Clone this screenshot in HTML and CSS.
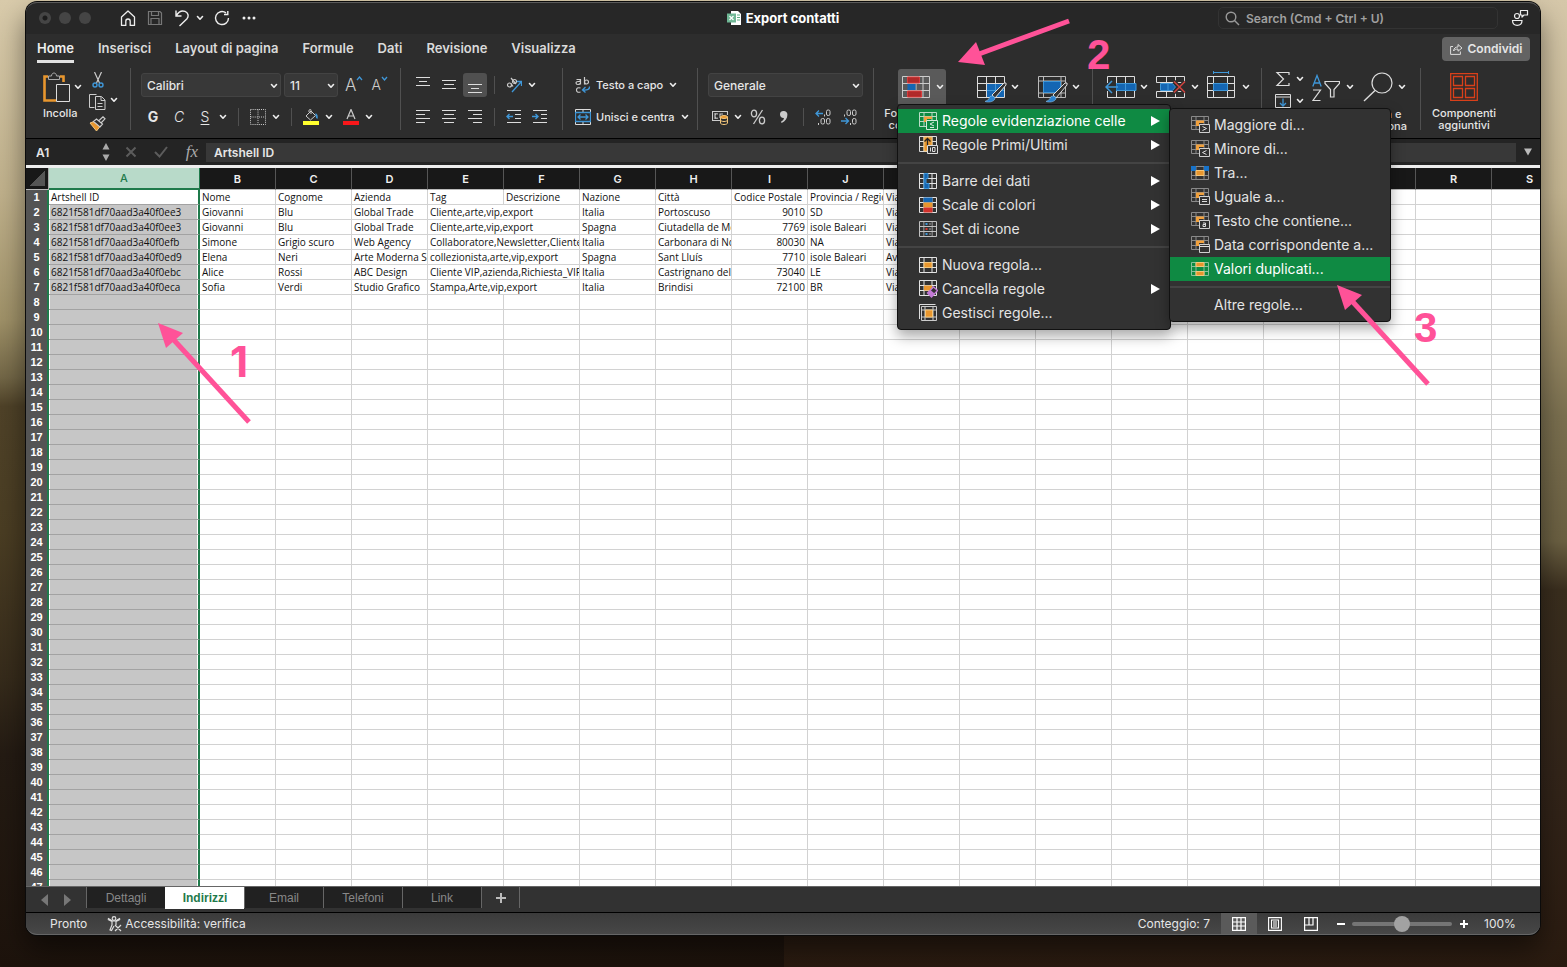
FILE: index.html
```html
<!DOCTYPE html>
<html lang="it">
<head>
<meta charset="utf-8">
<title>Export contatti</title>
<link rel="stylesheet" href="styles.css">
</head>
<body>
<svg class="defs" width="0" height="0" aria-hidden="true">
  <symbol id="chev" viewBox="0 0 8 8"><path d="M1.500 2.500 4 5.200 6.500 2.500" fill="none" stroke="#eee" stroke-width="1.600" stroke-linecap="round" stroke-linejoin="round"/></symbol>
  <symbol id="grid" viewBox="0 0 18 16"><path d="M.5.500h17v15H.5zM5 .5v15M13 .5v15M.5 5.500h17M.5 10.500h17" fill="none" stroke="currentColor"/></symbol>
  <symbol id="biggrid" viewBox="0 0 28 22"><path d="M.5.500h27v21H.5zM7 .5v21M14 .5v21M21 .5v21M.5 7.500h27M.5 14.500h27" fill="none" stroke="#ccc"/></symbol>
  <symbol id="cellrule" viewBox="0 0 19 18"><path d="M.5.500h17v13H.5zM5 .5v13M13 .5v13M.5 4.500h17M.5 9.500h17" fill="none" stroke="#8a8a8a"/><path d="M5 4.500h8V7H8v3H5z" fill="#f0a03c"/><path d="M8.500 8.500h10v8h-10z" fill="#323232" stroke="#d0d0d0"/></symbol>
</svg>

<main class="window">
  <header class="titlebar">
    <div class="title-left">
      <span class="light dot"></span><span class="light"></span><span class="light"></span>
      <button class="tool home" aria-label="Home"><svg width="16" height="16" viewBox="0 0 16 16"><path d="M1.500 7 8 1l6.500 6v8.500h-4.300v-4.300a2.200 2.200 0 0 0-4.400 0v4.300H1.500z" fill="none" stroke="#eee" stroke-width="1.300" stroke-linejoin="round"/></svg></button>
      <button class="tool" aria-label="Salva"><svg width="16" height="16" viewBox="0 0 16 16"><path d="M1.500 1.500h11.500l1.500 1.500v11.500h-13zM4.500 1.500v4h7v-4M4 14.500v-6h8v6" fill="none" stroke="#777" stroke-width="1.200"/></svg></button>
      <button class="tool" aria-label="Annulla"><svg width="16" height="18" viewBox="0 0 16 18"><path d="M2 1.500v5.500h5.500M2.300 6.700C4.500 3 8 1.300 11 2.400c3.200 1.300 4 4.600 2 7.300L5.500 17" fill="none" stroke="#eee" stroke-width="1.400"/></svg></button>
      <svg class="chev" width="8" height="8"><use href="#chev"/></svg>
      <button class="tool" aria-label="Ripeti"><svg width="16" height="16" viewBox="0 0 16 16"><path d="M14.500 8A6.500 6.500 0 1 1 12 2.900M10 4.500h3.800V1" fill="none" stroke="#eee" stroke-width="1.400"/></svg></button>
      <button class="tool" aria-label="Altro"><svg width="16" height="16" viewBox="0 0 16 16"><g fill="#eee"><circle cx="3" cy="8" r="1.500"/><circle cx="8" cy="8" r="1.500"/><circle cx="13" cy="8" r="1.500"/></g></svg></button>
    </div>
    <h1 class="doc-title"><svg width="14" height="14" viewBox="0 0 14 14"><path d="M4 0h7l3 3v11H4z" fill="#fff"/><path d="M10 4h3M10 6.500h3M10 9h3" stroke="#5fae87"/><path d="M0 2.500h9v9H0z" fill="#6fb795"/><path d="m2.500 5 4 4M6.500 5l-4 4" stroke="#fff" stroke-width="1.200"/></svg>Export contatti</h1>
    <div class="title-right">
      <label class="search"><svg width="15" height="15" viewBox="0 0 15 15"><circle cx="6" cy="6" r="4.800" fill="none" stroke="#999" stroke-width="1.400"/><path d="m9.500 9.500 4.500 4.500" stroke="#999" stroke-width="1.400"/></svg><input type="search" aria-label="Search" placeholder="Search (Cmd + Ctrl + U)"></label>
      <button class="tool" aria-label="Presenza"><svg width="18" height="18" viewBox="0 0 18 18"><g fill="none" stroke="#eee" stroke-width="1.200"><circle cx="6" cy="7" r="2.500"/><path d="M1.500 11.500h9.500c0 3-1.800 4.800-4.800 4.800s-4.700-1.800-4.700-4.800z"/><path d="M9.500 1.500h7v4.500h-3.500l-2 2V6H9.500z" stroke-linejoin="round"/></g></svg></button>
    </div>
  </header>

  <nav class="tabs">
    <a href="#" class="on">Home</a><a href="#">Inserisci</a><a href="#">Layout di pagina</a><a href="#">Formule</a><a href="#">Dati</a><a href="#">Revisione</a><a href="#">Visualizza</a>
    <button class="share"><svg width="13" height="12" viewBox="0 0 13 12"><path d="M3 3.500H.6v7.900h9.800V8.500M3.500 8C4 5 5.500 4 8 4V1.500L12 5 8 8.200V6C6 6 4.500 6.500 3.500 8z" fill="none" stroke="#ddd" stroke-linejoin="round"/></svg>Condividi</button>
  </nav>

  <section class="ribbon" aria-label="Barra multifunzione">
    <div class="group clip">
      <button class="big"><svg width="27" height="31" viewBox="0 0 27 31"><path d="M5 4.500H1.500v24H13M17 4.500h3.500V10" fill="none" stroke="#e8962e" stroke-width="2.600"/><path d="M5.500 7.500V4h3c0-4 5-4 5 0h3v3.500z" fill="#2d2d2d" stroke="#aaa"/><path d="M13.500 12.500h13v17h-13z" fill="#2d2d2d" stroke="#ddd"/></svg><span>Incolla</span></button>
      <svg class="chev" width="8" height="8"><use href="#chev"/></svg>
      <div class="stack">
        <button class="tool" aria-label="Taglia"><svg width="16" height="16" viewBox="0 0 16 16"><path d="m4.500 0 5 11M11.500 0l-5 11" stroke="#ccc" stroke-width="1.200"/><g fill="none" stroke="#3f97d8" stroke-width="1.400"><circle cx="5" cy="13" r="2"/><circle cx="11" cy="13" r="2"/></g></svg></button>
        <button class="tool" aria-label="Copia"><svg width="17" height="16" viewBox="0 0 17 16"><path d="M5.500 13.500h-5V.5h7M6.500 2.500h6l3.500 3.500v9.500H6.500zM12 3v3.500h4M8.500 9.500h5M8.500 12.500h5" fill="none" stroke="#ccc"/></svg></button>
        <button class="tool" aria-label="Copia formato"><svg width="17" height="16" viewBox="0 0 17 16"><path d="m1 7 4-1.500 6 5L7.500 15z" fill="#e8962e" stroke="#f3c77c"/><path d="m4.500 5.500 3-2.500 6 5-2.500 3zM9.500 5 14 .8l2 2L12 7" fill="#2d2d2d" stroke="#ccc" stroke-width="1.200"/></svg></button>
      </div>
      <svg class="chev" width="8" height="8"><use href="#chev"/></svg>
    </div>

    <div class="group font">
      <div class="row tight">
        <span class="pick wide"><select aria-label="Tipo di carattere"><option>Calibri</option></select><svg width="8" height="8"><use href="#chev"/></svg></span>
        <span class="pick small"><select aria-label="Dimensione"><option>11</option></select><svg width="8" height="8"><use href="#chev"/></svg></span>
        <button class="tool grow" aria-label="Aumenta dimensione">A<svg width="7" height="5" viewBox="0 0 7 5"><path d="m1 4 2.500-3L6 4" fill="none" stroke="#3f97d8" stroke-width="1.300"/></svg></button>
        <button class="tool shrink" aria-label="Riduci dimensione">A<svg width="7" height="5" viewBox="0 0 7 5"><path d="m1 1 2.500 3L6 1" fill="none" stroke="#3f97d8" stroke-width="1.300"/></svg></button>
      </div>
      <div class="row inset">
        <button class="tool letter b">G</button><button class="tool letter i">C</button><button class="tool letter u">S</button><svg class="chev" width="8" height="8"><use href="#chev"/></svg>
        <i class="sep"></i>
        <button class="tool" aria-label="Bordi"><svg width="16" height="16" viewBox="0 0 16 16"><path d="M.5.500h15v15H.5zM8 .5v15M.5 8h15" fill="none" stroke="#ccc" stroke-dasharray="1 1.100"/></svg></button><svg class="chev" width="8" height="8"><use href="#chev"/></svg>
        <i class="sep"></i>
        <button class="tool" aria-label="Colore riempimento"><svg width="16" height="16" viewBox="0 0 16 16"><path d="m3 7 5-5 4.500 4.500-5 4.500zM8 5V1.500C8-.5 5.500 0 6 3" fill="none" stroke="#ccc"/><path d="M12.500 4q3 1.500 2 6-2-1-2-4z" fill="#3f97d8"/><path d="M0 12h16v4H0z" fill="#ffff2e"/></svg></button><svg class="chev" width="8" height="8"><use href="#chev"/></svg>
        <button class="tool" aria-label="Colore carattere"><svg width="16" height="16" viewBox="0 0 16 16"><path d="M4 10 8 .5l4 9.500M5.300 7h5.400" fill="none" stroke="#ccc" stroke-width="1.200"/><path d="M0 12h16v4H0z" fill="#f8171a"/></svg></button><svg class="chev" width="8" height="8"><use href="#chev"/></svg>
      </div>
    </div>

    <div class="group align">
      <div class="row">
        <button class="tool" aria-label="In alto"><svg width="16" height="16" viewBox="0 0 16 16"><path d="M1 .5h14M4 4.500h8M1 8.500h14" stroke="#ddd"/></svg></button>
        <button class="tool" aria-label="Al centro"><svg width="16" height="16" viewBox="0 0 16 16"><path d="M1 3.500h14M3 7.500h10M1 11.500h14" stroke="#ddd"/></svg></button>
        <button class="tool pressed" aria-label="In basso"><svg width="16" height="16" viewBox="0 0 16 16"><path d="M1 7.500h14M4 11.500h8M1 15.500h14" stroke="#ddd"/></svg></button>
        <i class="sep"></i>
        <button class="tool" aria-label="Orientamento"><svg width="16" height="16" viewBox="0 0 16 16"><path d="M6 15 15 5M11 4.500h4.500V9" fill="none" stroke="#3f97d8" stroke-width="1.300"/><g fill="none" stroke="#ccc" stroke-width="1.200"><circle cx="3.500" cy="8" r="2"/><path d="m5 6.500 2 3M5 1l5 6"/><circle cx="8.500" cy="4.500" r="2"/></g></svg></button><svg class="chev" width="8" height="8"><use href="#chev"/></svg>
      </div>
      <div class="row">
        <button class="tool" aria-label="Sinistra"><svg width="16" height="16" viewBox="0 0 16 16"><path d="M1 1.500h14M1 5.500h9M1 9.500h14M1 13.500h9" stroke="#ddd"/></svg></button>
        <button class="tool" aria-label="Centra"><svg width="16" height="16" viewBox="0 0 16 16"><path d="M1 1.500h14M3 5.500h10M1 9.500h14M3 13.500h10" stroke="#ddd"/></svg></button>
        <button class="tool" aria-label="Destra"><svg width="16" height="16" viewBox="0 0 16 16"><path d="M1 1.500h14M6 5.500h9M1 9.500h14M6 13.500h9" stroke="#ddd"/></svg></button>
        <i class="sep"></i>
        <button class="tool" aria-label="Riduci rientro"><svg width="16" height="16" viewBox="0 0 16 16"><path d="M1 1.500h14M9 5.500h6M9 9.500h6M1 13.500h14" stroke="#ddd"/><path d="M7 7.500H1M3.500 5 1 7.500 3.500 10" fill="none" stroke="#3f97d8" stroke-width="1.400"/></svg></button>
        <button class="tool" aria-label="Aumenta rientro"><svg width="16" height="16" viewBox="0 0 16 16"><path d="M1 1.500h14M9 5.500h6M9 9.500h6M1 13.500h14" stroke="#ddd"/><path d="M0 7.500h6M3.500 5 6 7.500 3.500 10" fill="none" stroke="#3f97d8" stroke-width="1.400"/></svg></button>
      </div>
    </div>

    <div class="group wrap">
      <div class="row">
        <button class="text"><svg width="16" height="16" viewBox="0 0 16 16"><g fill="none" stroke="#ccc" stroke-width="1.200"><path d="M5.500 2v5.500M1.500 2.500h3l1 1M5.500 4.500H3q-2 0-2 1.500t2 1.500 2.500-1.500M9.500 0v7.500"/><circle cx="11.500" cy="5" r="2"/><path d="M5.500 11q-4-1-4 2t4 2"/></g><path d="M14.500 9.500q.5 4-6.500 3.500M10.500 10 7.500 13l3 2.500" fill="none" stroke="#3f97d8" stroke-width="1.300"/></svg>Testo a capo</button><svg class="chev" width="8" height="8"><use href="#chev"/></svg>
      </div>
      <div class="row">
        <button class="text"><svg width="16" height="16" viewBox="0 0 16 16"><path d="M.5.500h15v3H.5zM.5 12.500h15v3H.5zM8 .5v3M8 12.500v3" fill="none" stroke="#ddd"/><path d="M.5 3.500h15v9H.5zM3 8h10M5.500 5.500 3 8l2.500 2.500M10.500 5.500 13 8l-2.500 2.500" fill="none" stroke="#3f97d8" stroke-width="1.300"/></svg>Unisci e centra</button><svg class="chev" width="8" height="8"><use href="#chev"/></svg>
      </div>
    </div>

    <div class="group number">
      <div class="row">
        <span class="pick fill"><select aria-label="Formato numero"><option>Generale</option></select><svg width="8" height="8"><use href="#chev"/></svg></span>
      </div>
      <div class="row nudge">
        <button class="tool" aria-label="Valuta"><svg width="16" height="16" viewBox="0 0 16 16"><path d="M15.500 6V2.500H.5v9h8M6 5Q3 4 3 7t3 2M8 9V5h3M3 4v6" fill="none" stroke="#ccc" stroke-width="1.100"/><path d="M8.500 8v6c0 2 7 2 7 0V8z" fill="#2d2d2d" stroke="#f3c77c"/><ellipse cx="12" cy="8" rx="3.500" ry="1.500" fill="#e8962e" stroke="#f3c77c"/><path d="M8.500 11c0 2 7 2 7 0" fill="none" stroke="#f3c77c"/></svg></button><svg class="chev" width="8" height="8"><use href="#chev"/></svg>
        <button class="tool" aria-label="Percentuale"><svg width="16" height="16" viewBox="0 0 16 16"><g fill="none" stroke="#ccc" stroke-width="1.300"><ellipse cx="4" cy="4.500" rx="2.600" ry="3.300"/><ellipse cx="12" cy="11.500" rx="2.600" ry="3.300"/><path d="M12.500 1 3.500 15"/></g></svg></button>
        <button class="tool" aria-label="Virgola"><svg width="16" height="16" viewBox="0 0 16 16"><path d="M7.500 2a3.600 3.600 0 0 1 3.900 3.800c0 3.700-2 6.400-5.800 8.200l-.6-1.200q3-1.500 3-3.800C5.500 9.200 4 7.500 4 5.600A3.500 3.500 0 0 1 7.500 2z" fill="#ccc"/></svg></button>
        <i class="sep"></i>
        <button class="tool" aria-label="Aumenta decimali"><svg width="16" height="16" viewBox="0 0 16 16"><g fill="none" stroke="#ccc"><rect x="11.500" y="1" width="3.500" height="5.500" rx="1.500"/><rect x="6" y="9.500" width="3.500" height="5.500" rx="1.500"/><rect x="11.500" y="9.500" width="3.500" height="5.500" rx="1.500"/><path d="M3.500 14v2M9.500 5.500v2"/></g><path d="M8 4.500H1M4 1.500l-3 3 3 3" fill="none" stroke="#3f97d8" stroke-width="1.300"/></svg></button>
        <button class="tool" aria-label="Riduci decimali"><svg width="16" height="16" viewBox="0 0 16 16"><g fill="none" stroke="#ccc"><rect x="6" y="1" width="3.500" height="5.500" rx="1.500"/><rect x="11.500" y="1" width="3.500" height="5.500" rx="1.500"/><rect x="11.500" y="9.500" width="3.500" height="5.500" rx="1.500"/><path d="M3.500 5.500v2M9.500 14v2"/></g><path d="M0 12h7.500M4.500 9l3 3-3 3" fill="none" stroke="#3f97d8" stroke-width="1.300"/></svg></button>
      </div>
    </div>

    <div class="group styles">
      <div class="cf">
        <button class="cf-btn" aria-haspopup="menu" aria-label="Formattazione condizionale"><svg width="28" height="22" viewBox="0 0 28 22"><use href="#biggrid"/><path d="M5.500 1h12v6h-12zM5.500 15h14v6h-14z" fill="#b02a2a" stroke="#d83b3b"/><path d="M5.500 8h8v6h-8z" fill="#1466b3"/></svg><svg width="8" height="8"><use href="#chev"/></svg></button>
        <span class="cf-label">Formattazione condizionale</span>
      </div>
      <button class="tool pic" aria-label="Formatta come tabella"><svg width="32" height="27" viewBox="0 0 32 27"><path d="M9.500 7.500h18v14h-18z" fill="#1466b3"/><path d="M.5.500h27v21H.5zM9.500.5v21M18.500.5v21M.5 7.500h27M.5 14.500h27" fill="none" stroke="#ddd"/><path d="M10 14.500h17M18.500 8v13" stroke="#3f97d8"/><path d="m15 19 12-12q3-1 2 2L18 22z" fill="#333" stroke="#ddd"/><path d="M8 25.500q4-1 5-5 4-1.500 5 1.500c0 3-5 5-10 3.500z" fill="#2a84d2" stroke="#8cc4f0" stroke-width=".6"/></svg></button><svg class="chev lift" width="8" height="8"><use href="#chev"/></svg>
      <button class="tool pic second" aria-label="Stili cella"><svg width="32" height="27" viewBox="0 0 32 27"><path d="M.5.500h27v21H.5zM5.500.5v21M23 .5v21M.5 5h27M.5 17h27" fill="none" stroke="#bbb"/><path d="M5.500 5.500h17v11h-17z" fill="#1466b3" stroke="#3f97d8"/><path d="m15 19 12-12q3-1 2 2L18 22z" fill="#333" stroke="#ddd"/><path d="M8 25.500q4-1 5-5 4-1.500 5 1.500c0 3-5 5-10 3.500z" fill="#2a84d2" stroke="#8cc4f0" stroke-width=".6"/></svg></button><svg class="chev lift" width="8" height="8"><use href="#chev"/></svg>
    </div>

    <div class="group cells">
      <button class="tool pic" aria-label="Inserisci celle"><svg width="32" height="27" viewBox="0 0 32 27"><path d="M2.500.5h27v21h-27zM11.500.5v21M20.500.5v21" fill="none" stroke="#ddd"/><path d="M11 7.500h20v7H11z" fill="#1466b3" stroke="#3f97d8"/><path d="M2 7h9v8H2z" fill="#2d2d2d"/><path d="M13 11H1M7 5l-6 6 6 6" fill="none" stroke="#3f97d8" stroke-width="1.500"/><path d="M20.500 7v8" stroke="#3f97d8"/></svg></button><svg class="chev lift" width="8" height="8"><use href="#chev"/></svg>
      <button class="tool pic" aria-label="Elimina celle"><svg width="32" height="27" viewBox="0 0 32 27"><path d="M.5 6.500v-6h28v6zM.5 15.500v6h28v-6zM10.500.5v6M19.500.5v6M10.500 15.500v6M19.500 15.500v6" fill="none" stroke="#ddd"/><path d="M4.500 7.500h12l3 3.500-3 3.500h-12zM12 7.500v7" fill="#1466b3" stroke="#3f97d8"/><path d="m18 5.500 11 11M29 5.500 18 16.500" stroke="#2d2d2d" stroke-width="4"/><path d="m18 5.500 11 11M29 5.500 18 16.500" stroke="#d0433e" stroke-width="1.500"/></svg></button><svg class="chev lift" width="8" height="8"><use href="#chev"/></svg>
      <button class="tool pic tall" aria-label="Formato celle"><svg width="32" height="32" viewBox="0 0 32 32"><path d="M.5 5.500h27v21H.5zM6.500 5.500v21M20.500 5.500v21M.5 12.500h27M.5 19.500h27" fill="none" stroke="#ddd"/><path d="M6.500 12.500h14v7h-14z" fill="#1466b3" stroke="#3f97d8"/><path d="M6 1.500h16M6.500 0v3M21.500 0v3" stroke="#3f97d8"/></svg></button><svg class="chev lift" width="8" height="8"><use href="#chev"/></svg>
    </div>

    <div class="group edit">
      <div class="pair">
        <div class="line"><button class="tool" aria-label="Somma"><svg width="16" height="16" viewBox="0 0 16 16"><path d="M14 4V1.500H2L8.500 8 2 14.500h12V12" fill="none" stroke="#ddd" stroke-width="1.200"/></svg></button><svg class="chev" width="8" height="8"><use href="#chev"/></svg></div>
        <div class="line"><button class="tool" aria-label="Riempimento"><svg width="16" height="14" viewBox="0 0 16 14"><path d="M.5.500h15v13H.5zM.5 3h15" fill="none" stroke="#ddd"/><path d="M8 4.500v7.500M5 9l3 3 3-3" fill="none" stroke="#3f97d8" stroke-width="1.300"/></svg></button><svg class="chev" width="8" height="8"><use href="#chev"/></svg></div>
      </div>
      <button class="tool sort" aria-label="Ordina e filtra"><svg width="28" height="28" viewBox="0 0 28 28"><path d="M.8 12.500 5 1.500l4.200 11M2.200 9h5.600" fill="none" stroke="#3f97d8" stroke-width="1.300"/><path d="M1 16h7.500L1 26.500h7.500M13 7.500h14.500v2L22 15.500V23h-3.500v-7.500L13 9.500z" fill="none" stroke="#ddd" stroke-width="1.200"/></svg></button><svg class="chev lift" width="8" height="8"><use href="#chev"/></svg>
      <button class="find"><svg width="30" height="30" viewBox="0 0 30 30"><circle cx="19" cy="11" r="10" fill="none" stroke="#ddd" stroke-width="1.200"/><path d="M12 18.500 1 29" stroke="#ddd" stroke-width="1.400"/></svg><span>Trova e seleziona</span></button><svg class="chev lift" width="8" height="8"><use href="#chev"/></svg>
    </div>

    <div class="group addins">
      <button class="big"><svg width="28" height="28" viewBox="0 0 28 28"><path d="M.7.700h26.600v26.600H.7zM3.500 3.500h9v9h-9zM15.500 3.500h9v9h-9zM3.500 15.500h9v9h-9zM15.500 15.500h9v9h-9z" fill="none" stroke="#d9401a" stroke-width="1.300"/></svg><span>Componenti<br>aggiuntivi</span></button>
    </div>
  </section>

  <section class="formula">
    <input class="name" aria-label="Casella nome" value="A1">
    <svg class="spin" width="8" height="18" viewBox="0 0 8 18"><path d="M4 0 7.500 6.500h-7zM4 18 .5 11.500h7z" fill="#aaa"/></svg>
    <button class="tool" aria-label="Annulla immissione"><svg width="12" height="12" viewBox="0 0 12 12"><path d="m1.500 1.500 9 9M10.500 1.500l-9 9" stroke="#5c5c5c" stroke-width="2"/></svg></button>
    <button class="tool" aria-label="Conferma"><svg width="14" height="12" viewBox="0 0 14 12"><path d="m1 6 4.500 4.500L13 1" fill="none" stroke="#5c5c5c" stroke-width="2"/></svg></button>
    <button class="tool fx">fx</button>
    <input class="content" aria-label="Barra della formula" value="Artshell ID">
    <svg class="drop" width="8" height="8" viewBox="0 0 8 8"><path d="M0 .5h8L4 7.500z" fill="#bbb"/></svg>
  </section>

  <section class="sheet"><table class="cells-table" id="sheet"></table></section>

  <footer>
    <div class="sheets">
      <div class="arrows"><svg width="7" height="12" viewBox="0 0 7 12"><path d="M7 0v12L0 6z" fill="#777"/></svg><svg width="7" height="12" viewBox="0 0 7 12"><path d="M0 0v12l7-6z" fill="#777"/></svg></div>
      <button>Dettagli</button><button class="on">Indirizzi</button><button>Email</button><button>Telefoni</button><button>Link</button><button class="add" aria-label="Nuovo foglio"><svg width="10" height="10" viewBox="0 0 10 10"><path d="M5 0v10M0 5h10" stroke="#bbb" stroke-width="2"/></svg></button>
    </div>
    <div class="status">
      <span class="ready">Pronto</span>
      <button class="a11y"><svg width="15" height="16" viewBox="0 0 15 16"><g fill="none" stroke="#ddd" stroke-width="1.200"><circle cx="7" cy="2.500" r="1.800"/><path d="M1 3.500 5 5.500v3.500l-2 5 1.500.5L7 10M13 3.500 9 5.500V9M1 3.500l.5-1L5.500 5h3l4-2.500.5 1M8 9l6 6M14 9l-6 6"/></g></svg>Accessibilità: verifica</button>
      <span class="count">Conteggio: 7</span>
      <button class="view on" aria-label="Normale"><svg width="14" height="14" viewBox="0 0 14 14"><path d="M.6.600h12.800v12.800H.6zM5 .6v12.800M9 .6v12.800M.6 5h12.800M.6 9h12.800" fill="none" stroke="#fff" stroke-width="1.200"/></svg></button>
      <button class="view" aria-label="Layout di pagina"><svg width="14" height="14" viewBox="0 0 14 14"><path d="M.6.600h12.800v12.800H.6zM3.500 3h7v8h-7zM5 5h4M5 7h4M5 9h4" fill="none" stroke="#fff" stroke-width="1.100"/></svg></button>
      <button class="view" aria-label="Interruzioni di pagina"><svg width="14" height="14" viewBox="0 0 14 14"><path d="M.6.600h12.800v12.800H.6zM.6 8H9V.6M5 .6V8" fill="none" stroke="#fff" stroke-width="1.200"/></svg></button>
      <button class="zoomer" aria-label="Riduci"><svg width="8" height="8" viewBox="0 0 8 8"><path d="M0 4h8" stroke="#fff" stroke-width="2"/></svg></button>
      <input type="range" class="zoom" aria-label="Zoom" min="0" max="100" value="50">
      <button class="zoomer" aria-label="Aumenta"><svg width="8" height="8" viewBox="0 0 8 8"><path d="M0 4h8M4 0v8" stroke="#fff" stroke-width="2"/></svg></button>
      <span class="pct">100%</span>
    </div>
  </footer>

  <div class="menu main-menu" role="menu">
    <button role="menuitem" class="sel"><svg width="19" height="18" viewBox="0 0 19 18"><path d="M.5.500h17v14H.5zM5 .5v14M13 .5v14M.5 4.500h17M.5 9.500h17" fill="none" stroke="#b9dcc6"/><path d="M5 4.500h8V7H8v3H5z" fill="#f0a03c"/><path d="M7.500 8.500h11v9h-11z" fill="#0f8a43" stroke="#d5ebdd"/><path d="m15 10-4 2 4 2M11 15.500h4" fill="none" stroke="#d5ebdd"/></svg>Regole evidenziazione celle<i></i></button>
    <button role="menuitem"><svg width="19" height="18" viewBox="0 0 19 18"><path d="M.5.500h17v15H.5zM5 .5v15M13 .5v15M.5 5.500h17M.5 10.500h17" fill="none" stroke="#ddd"/><path d="M5 1h8v14H5z" fill="#e8962e" stroke="#f3c77c"/><path d="M8.500 10V2.500M5.500 5.500l3-3 3 3" fill="none" stroke="#222" stroke-width="1.300"/><path d="M8.500 9.500h10v8h-10z" fill="#323232" stroke="#ddd"/><path d="M11.500 11.500v4M13.500 11.500h2.500v4h-2.500z" fill="none" stroke="#ddd"/></svg>Regole Primi/Ultimi<i></i></button>
    <hr>
    <button role="menuitem"><svg width="19" height="16" viewBox="0 0 19 16"><use href="#grid" width="18" height="16"/><path d="M5 .5h4v5H7v5h3v5H5z" fill="#1466b3" stroke="#3f97d8"/></svg>Barre dei dati<i></i></button>
    <button role="menuitem"><svg width="19" height="16" viewBox="0 0 19 16"><use href="#grid" width="18" height="16"/><path d="M4.500.5h9v5h-9z" fill="#1466b3"/><path d="M4.500 5.500h9v5h-9z" fill="#e8962e"/><path d="M4.500 10.500h9v5h-9z" fill="#d3312b"/></svg>Scale di colori<i></i></button>
    <button role="menuitem"><svg width="19" height="16" viewBox="0 0 19 16"><use href="#grid" width="18" height="16" opacity=".8"/><path d="M5.500 1h7v4h-7zM5.500 6h7v4h-7zM5.500 11h7v4h-7z" fill="#323232"/><path d="M6.500 3h2M6.500 13h2" stroke="#3f97d8" stroke-width="2"/><path d="M6.500 8h2" stroke="#d3312b" stroke-width="2"/><path d="M10 3h2M10 8h2M10 13h2" stroke="#999"/></svg>Set di icone<i></i></button>
    <hr>
    <button role="menuitem"><svg width="19" height="16" viewBox="0 0 19 16"><use href="#grid" width="18" height="16"/><path d="M5 5.500h8v5H5z" fill="#e8962e" stroke="#f3c77c"/></svg>Nuova regola...</button>
    <button role="menuitem"><svg width="19" height="18" viewBox="0 0 19 18"><use href="#grid" width="18" height="16"/><path d="M5 5.500h8v5H5z" fill="#e8962e"/><path d="m8.500 13 6-6 4 3.500-6 6.500z" fill="#323232" stroke="#c37ad6" stroke-width="1.300"/><path d="m8.500 13 3-3 4 3.500-3 3.500z" fill="#c37ad6"/></svg>Cancella regole<i></i></button>
    <button role="menuitem"><svg width="19" height="18" viewBox="0 0 19 18"><path d="M.5 15V.500h16" fill="none" stroke="#ddd"/><path d="M2.500 2.500h15v14h-15zM6 2.500v14M14 2.500v14M2.500 6h15M2.500 13h15" fill="none" stroke="#ccc"/><path d="M6.500 6h7v7h-7z" fill="#e8962e" stroke="#f3c77c"/></svg>Gestisci regole...</button>
  </div>

  <div class="menu sub-menu" role="menu">
    <button role="menuitem"><svg width="19" height="18"><use href="#cellrule"/><path d="m11.500 10.500 4 2-4 2" fill="none" stroke="#ddd"/></svg>Maggiore di...</button>
    <button role="menuitem"><svg width="19" height="18"><use href="#cellrule"/><path d="m15.500 10.500-4 2 4 2" fill="none" stroke="#ddd"/></svg>Minore di...</button>
    <button role="menuitem"><svg width="19" height="14"><path d="M.5.500h17v13H.5zM5 .5v13M13 .5v13M.5 4.500h17M.5 9.500h17" fill="none" stroke="#8a8a8a"/><path d="M0 0h5v5H0zM13 0h5v5h-5z" fill="#1873c9"/><path d="M5 4.500h8v5H5z" fill="#e8962e" stroke="#f3c77c"/></svg>Tra...</button>
    <button role="menuitem"><svg width="19" height="18"><use href="#cellrule"/><path d="M11 11.500h5M11 13.500h5" stroke="#ddd"/></svg>Uguale a...</button>
    <button role="menuitem"><svg width="19" height="18"><use href="#cellrule"/><path d="M12 11h2.500v3.500H12v-2h2.500" fill="none" stroke="#ddd"/></svg>Testo che contiene...</button>
    <button role="menuitem"><svg width="19" height="18"><use href="#cellrule"/><path d="M9 10.500h9" stroke="#ddd"/></svg>Data corrispondente a...</button>
    <button role="menuitem" class="sel"><svg width="19" height="14"><path d="M.5.500h17v13H.5zM5 .5v13M13 .5v13M.5 4.500h17M.5 9.500h17" fill="none" stroke="#86c09c"/><path d="M5 .5h8v4H5zM5 9.500h8v4H5z" fill="#e8962e" stroke="#f3c77c"/></svg>Valori duplicati...</button>
    <hr>
    <button role="menuitem"><span class="blank"></span>Altre regole...</button>
  </div>

  <svg class="arrow a1" width="96" height="104" viewBox="0 0 96 104"><path d="M92 101 16 18" stroke="#ff5298" stroke-width="5"/><path d="m1 2 25 10L9 27z" fill="#ff5298"/></svg>
  <svg class="arrow a2" width="116" height="50" viewBox="0 0 116 50"><path d="M112 4 22 37" stroke="#ff5298" stroke-width="5"/><path d="m1 45 18-20 9 23z" fill="#ff5298"/></svg>
  <svg class="arrow a3" width="96" height="104" viewBox="0 0 96 104"><path d="M92 101 16 18" stroke="#ff5298" stroke-width="5"/><path d="m1 2 25 10L9 27z" fill="#ff5298"/></svg>
  <span class="num n1">1</span><span class="num n2">2</span><span class="num n3">3</span>
</main>
<script src="sheet.js"></script>
</body>
</html>
```
FILE: sheet.js
```js
const letters = "ABCDEFGHIJKLMNOPQRS".split("");
const rows = [
  ["Artshell ID", "Nome", "Cognome", "Azienda", "Tag", "Descrizione", "Nazione", "Città", "Codice Postale", "Provincia / Regione", "Via"],
  ["6821f581df70aad3a40f0ee3", "Giovanni", "Blu", "Global Trade", "Cliente,arte,vip,export", null, "Italia", "Portoscuso", "9010", "SD", "Via"],
  ["6821f581df70aad3a40f0ee3", "Giovanni", "Blu", "Global Trade", "Cliente,arte,vip,export", null, "Spagna", "Ciutadella de Menorca", "7769", "isole Baleari", "Via"],
  ["6821f581df70aad3a40f0efb", "Simone", "Grigio scuro", "Web Agency", "Collaboratore,Newsletter,Cliente", null, "Italia", "Carbonara di Nola", "80030", "NA", "Via"],
  ["6821f581df70aad3a40f0ed9", "Elena", "Neri", "Arte Moderna Srl", "collezionista,arte,vip,export", null, "Spagna", "Sant Lluís", "7710", "isole Baleari", "Av"],
  ["6821f581df70aad3a40f0ebc", "Alice", "Rossi", "ABC Design", "Cliente VIP,azienda,Richiesta_VIP", null, "Italia", "Castrignano del Capo", "73040", "LE", "Via"],
  ["6821f581df70aad3a40f0eca", "Sofia", "Verdi", "Studio Grafico", "Stampa,Arte,vip,export", null, "Italia", "Brindisi", "72100", "BR", "Via"]
];
const ROW_COUNT = 47;

const cols = '<colgroup><col class="c-head"><col class="c-id">' +
  letters.slice(1).map(() => '<col class="c-std">').join("") + "</colgroup>";

const head = '<thead><tr><th class="corner"></th>' +
  letters.map(l => `<th scope="col"${l === "A" ? ' class="picked"' : ""}>${l}</th>`).join("") + "</tr></thead>";

let body = "<tbody>";
for (let r = 0; r < ROW_COUNT; r++) {
  const data = rows[r] || [];
  body += `<tr><th scope="row">${r + 1}</th>`;
  letters.forEach((l, c) => {
    const value = data[c];
    if (value === null) return;
    const span = data[c + 1] === null ? ' colspan="2"' : "";
    const right = l === "I" && r > 0 ? ' class="right"' : "";
    body += `<td${span}${right}>${value || ""}</td>`;
  });
  body += "</tr>";
}
document.getElementById("sheet").innerHTML = cols + head + body + "</tbody>";
```
FILE: styles.css
```css
* { box-sizing: border-box; }

body {
  margin: 0;
  height: 100vh;
  padding: 2px 27px 32px 26px;
  overflow: hidden;
  display: flex;
  font-family: Inter, "Liberation Sans", sans-serif;
  color: #e6e6e6;
  background:
    linear-gradient(#d6c8aa 0, #c4b591 20%, #9a8b66 34%, #7b7050 43%, #6b6042 56%, #3a2e1e 61%, #33251a 80%, #2a1b10 100%) right / 50% 100% no-repeat,
    linear-gradient(#d9cbab 0, #bfb08b 20%, #9f9168 33%, #736747 39%, #4f4228 42%, #4a3d23 55%, #362b1b 70%, #241b13 78%, #1d130c 100%);
}

.defs { position: absolute; }

button, input, select {
  font: inherit;
  color: inherit;
  background: none;
  border: 0;
  padding: 0;
  margin: 0;
  outline: 0;
}
svg { display: block; flex: none; }

.window {
  position: relative;
  flex: 1;
  min-width: 0;
  display: flex;
  flex-direction: column;
  border-radius: 11px;
  background: #2d2d2d;
  box-shadow: 0 0 0 1px #0b0b0b, 0 14px 28px rgba(0, 0, 0, .5);
}

/* Title bar */
.titlebar {
  height: 32px;
  flex: none;
  display: grid;
  grid-template-columns: 1fr auto 1fr;
  align-items: center;
  padding-bottom: 1px;
  background: #272727;
  border-top: 1px solid #5a5a5a;
  border-radius: 11px 11px 0 0;
}
.title-left { display: flex; align-items: center; gap: 8px; padding-left: 13px; }
.light { width: 12px; height: 12px; border-radius: 50%; background: #454545; }
.light.dot { background: radial-gradient(circle, #1c1c1c 2px, #454545 3px); }
.tool { display: flex; align-items: center; justify-content: center; min-width: 16px; flex: none; }
.title-left .tool { margin-right: 3px; }
.title-left .home { margin-left: 21px; }
.title-left .chev { margin: 0 2px 0 -5px; }
.doc-title { display: flex; align-items: center; gap: 5px; margin: 0; font-size: 13px; line-height: 16px; font-weight: 700; color: #fff; }
.title-right { display: flex; justify-content: flex-end; align-items: center; gap: 13px; padding-right: 11px; }
.search { width: 280px; height: 22px; display: flex; align-items: center; gap: 6px; padding-left: 6px; border: 1px solid #333; border-radius: 5px; }
.search input { flex: 1; min-width: 0; font-size: 12px; font-weight: 600; }
.search input::placeholder { color: #a0a0a0; opacity: 1; }

/* Ribbon tabs */
.tabs { height: 30px; flex: none; display: flex; align-items: center; gap: 24px; padding: 0 10px 0 11px; font-size: 13px; line-height: 16px; font-weight: 600; }
.tabs a { color: #dadada; text-decoration: none; padding: 4px 0 7px; }
.tabs .on { box-shadow: inset 0 -3px #e2e2e2; color: #eee; }
.share { margin-left: auto; height: 24px; width: 88px; display: flex; align-items: center; justify-content: center; gap: 5px; background: #636363; border-radius: 4px; font-size: 12px; }

/* Ribbon */
.ribbon { height: 74px; flex: none; display: flex; font-size: 11px; font-weight: 500; }
.group { position: relative; flex: none; padding: 5px 0; }
.group:not(:last-child)::after { content: ""; position: absolute; right: 0; top: 4px; width: 1px; height: 62px; background: #505050; }
.row { display: flex; align-items: center; gap: 10px; height: 32px; }
.row .chev { margin-left: -4px; }
.sep { width: 1px; height: 18px; background: #505050; margin: 0 1px; }
.big { display: flex; flex-direction: column; align-items: center; gap: 3px; line-height: 12px; }
.clip { width: 105px; display: flex; padding: 8px 0 0 17px; gap: 4px; }
.clip .big { width: 34px; align-items: flex-start; gap: 4px; }
.clip > .chev { margin: 11px 0 0 -7px; }
.clip .stack + .chev { margin: 24px 0 0; }
.stack { display: flex; flex-direction: column; gap: 6px; margin-left: 3px; }
.font { width: 270px; padding-left: 10px; }
.row.tight { gap: 3px; }
.row.inset { padding-left: 4px; }
.pick { position: relative; height: 24px; background: #383838; border: 1px solid #434343; border-radius: 3px; }
.pick select { width: 100%; height: 100%; padding-left: 5px; appearance: none; font-size: 12px; }
.pick svg { position: absolute; right: 2px; top: 8px; }
.wide { width: 140px; }
.small { width: 54px; }
.fill { width: 155px; }
.grow, .shrink { align-items: flex-start; font-weight: 300; font-size: 17px; line-height: 18px; margin-left: 4px; color: #ccc; }
.shrink { font-size: 14px; margin-left: 5px; }
.letter { font-size: 14px; line-height: 16px; }
.letter.b { font-weight: 700; }
.letter.i, .letter.u { font-weight: 300; }
.letter.i { font-style: italic; }
.letter.u { text-decoration: underline; text-underline-offset: 2px; }
.align { width: 162px; padding-left: 14px; }
.pressed { height: 16px; background: #505050; box-shadow: 0 0 0 4px #505050; border-radius: 1px; }
.wrap { width: 135px; padding-left: 12px; }
.text { display: flex; align-items: center; gap: 5px; white-space: nowrap; }
.number { width: 176px; padding-left: 10px; }
.row.nudge { padding-left: 4px; }
.nudge .chev + .tool { margin-left: -2px; }
.styles { width: 219px; display: flex; padding-left: 24px; align-items: flex-start; }
.cf { width: 48px; display: flex; flex-direction: column; align-items: center; }
.cf-btn { width: 48px; height: 35px; display: flex; align-items: center; gap: 6px; padding-left: 4px; background: #5a5a5a; border-radius: 3px 3px 0 0; }
.cf-label { width: 76px; padding-top: 3px; line-height: 12px; text-align: center; }
.pic { width: 32px; margin: 7px 0 0 31px; align-items: flex-start; }
.second { margin-left: 19px; }
.lift { margin: 14px 0 0 2px; }
.cells { width: 169px; display: flex; align-items: flex-start; padding-left: 12px; }
.cells .pic { margin-left: 0; }
.cells .lift { margin-right: 8px; margin-left: 3px; }
.cells .tall { margin-top: 2px; }
.edit { width: 159px; display: flex; align-items: flex-start; padding: 5px 0 0 13px; }
.pair { display: flex; flex-direction: column; gap: 7px; padding-top: 2px; }
.line { display: flex; align-items: center; gap: 5px; }
.sort { margin: 5px 0 0 8px; }
.edit .lift { margin-left: 6px; }
.find { width: 30px; margin: 3px 0 0 9px; display: flex; flex-direction: column; align-items: flex-start; line-height: 12px; gap: 6px; }
.find span { width: 56px; margin-left: -9px; }
.find + .lift { margin-left: 5px; }
.addins { padding: 9px 0 0 11px; }
.addins .big { gap: 6px; width: 64px; }

/* Formula bar */
.formula { height: 30px; flex: none; display: flex; align-items: center; background: #242424; border-top: 1px solid #000; border-bottom: 3px solid #eee; font-size: 12px; font-weight: 600; }
.name { width: 76px; padding-left: 10px; }
.spin { margin-right: 13px; }
.formula .tool { margin-right: 14px; }
.formula .fx { font: italic 17px/18px "Liberation Serif", serif; color: #aaa; margin: 0 6px 0 1px; }
.content { flex: 1; height: 19px; padding-left: 8px; background: #383838; }
.drop { margin: 0 8px; }
.content + .drop { margin-left: 16px; }
.content { margin-right: -8px; }

/* Grid */
.sheet { flex: 1; min-height: 0; overflow: hidden; background: #fff; }
.cells-table { table-layout: fixed; width: 0; border-collapse: separate; border-spacing: 0; color: #111; font: 500 10px/14px "Open Sans", "Noto Sans", sans-serif; }
.c-head { width: 23px; }
.c-id { width: 151px; }
.c-std { width: 76px; }
.cells-table th, .cells-table td { padding: 0; overflow: hidden; white-space: nowrap; }
thead th { height: 22px; background: #181818; color: #f0f0f0; border-right: 1px solid #555; border-bottom: 1px solid #bbb; font: 600 11px/20px Inter, sans-serif; }
thead .corner { background: linear-gradient(135deg, transparent 50%, #555 50%) center / 15px 15px no-repeat #181818; border-right-color: #aaa; }
thead .picked { background: #b8dac9; color: #1f7a4b; border-right: 1px solid #1f7a4b; border-bottom: 2px solid #1f7a4b; font-weight: 500; }
tbody th { height: 15px; background: #545454; color: #fff; border-right: 2px solid #1f7a4b; font: 700 11px/15px "Liberation Sans", sans-serif; }
.cells-table td { height: 15px; padding: 0 2px; border-right: 1px solid #d2d2d2; border-bottom: 1px solid #d2d2d2; }
.cells-table td:nth-child(2) { background: #c6c6c6; border-right: 2px solid #1f7a4b; border-bottom-color: #a2a2a2; box-shadow: inset 1px 0 #fff, inset -1px 0 #fff; }
.cells-table tr:first-child td:nth-child(2) { background: #fff; }
.cells-table .right { text-align: right; }

/* Sheet tabs and status bar */
footer { flex: none; }
.sheets { height: 26px; display: flex; align-items: flex-start; background: #323232; border-top: 1px solid #666; font: 12px/23px "Liberation Sans", sans-serif; color: #888; }
.arrows { width: 60px; height: 25px; display: flex; align-items: center; gap: 16px; padding-left: 15px; }
.sheets button { width: 79px; height: 21px; background: #212121; border-left: 1px solid #666; }
.sheets .on { height: 22px; background: #fff; color: #1f7a4b; font-weight: 700; border-color: #fff; }
.sheets .add { width: 39px; display: flex; align-items: center; justify-content: center; background: #323232; border-right: 1px solid #666; }
.status { height: 23px; display: flex; align-items: center; background: linear-gradient(#3b3b3b, #474747); border-top: 1px solid #000; border-bottom: 1px solid #666; border-radius: 0 0 11px 11px; font-size: 12px; line-height: 16px; padding-left: 24px; }
.a11y { display: flex; align-items: center; gap: 3px; margin-left: 20px; }
.count { margin-left: auto; margin-right: 11px; }
.view { width: 36px; height: 21px; display: flex; align-items: center; justify-content: center; }
.view.on { background: #5a5a5a; }
.zoomer { margin: 0 7px 0 8px; }
.zoom { width: 100px; height: 16px; appearance: none; }
.zoom::-webkit-slider-runnable-track { height: 4px; border-radius: 2px; background: #757575; }
.zoom::-webkit-slider-thumb { appearance: none; width: 16px; height: 16px; margin-top: -6px; border-radius: 50%; background: #a2a2a2; }
.pct { width: 32px; margin: 0 24px 0 9px; }

/* Drop-down menus, over the sheet */
.menu { position: absolute; display: flex; flex-direction: column; padding: 4px 0; background: #323232; border: 1px solid #111; border-radius: 4px; box-shadow: 0 6px 14px rgba(0, 0, 0, .35); font-size: 14px; line-height: 24px; font-weight: 400; color: #e4e4e4; }
.menu button { height: 24px; display: flex; align-items: center; gap: 4px; padding: 0 10px 0 21px; text-align: left; white-space: nowrap; }
.menu .sel { background: #0f8a43; color: #fff; }
.menu hr { width: 100%; height: 2px; margin: 5px 0; border: 0; background: #444; }
.menu i { margin-left: auto; border-left: 9px solid #fff; border-top: 5px solid transparent; border-bottom: 5px solid transparent; }
.blank { width: 19px; }
.main-menu { left: 871px; top: 102px; width: 274px; }
.sub-menu { left: 1143px; top: 106px; width: 222px; }

/* Callouts, over everything */
.arrow, .num { position: absolute; }
.a1 { left: 131px; top: 319px; }
.a2 { left: 931px; top: 15px; }
.a3 { left: 1310px; top: 281px; }
.num { font: 700 42px/42px "Liberation Sans", sans-serif; color: #ff5298; }
.n1 { left: 204px; top: 339px; font-family: Inter, sans-serif; }
.n2 { left: 1061px; top: 32px; }
.n3 { left: 1388px; top: 305px; }
```
